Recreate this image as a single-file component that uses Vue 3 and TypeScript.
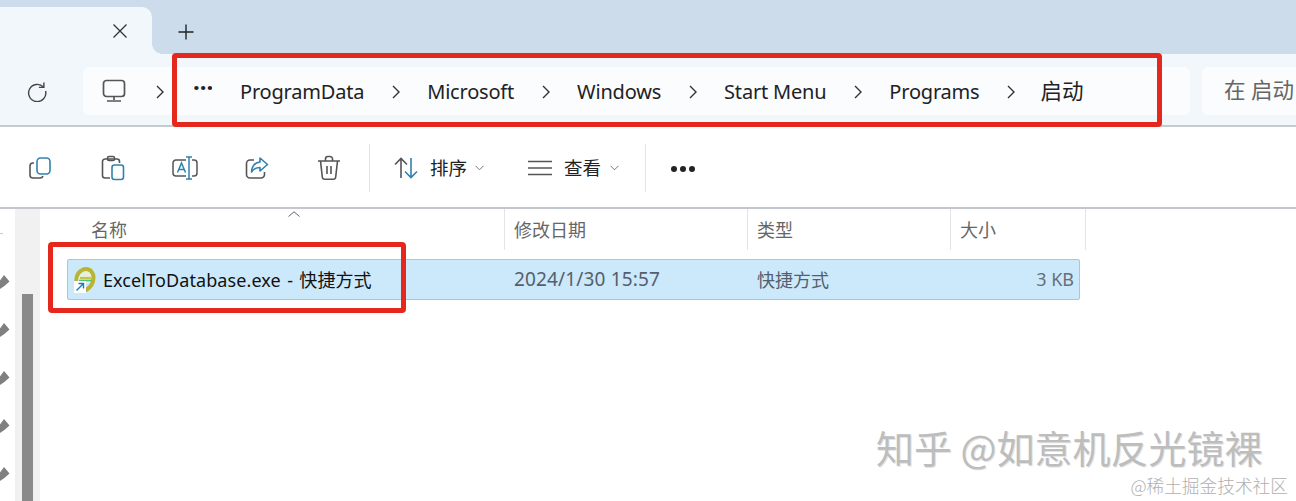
<script setup lang="ts">
const crumbs: string[] = ['ProgramData', 'Microsoft', 'Windows', 'Start Menu', 'Programs']
const pins: number[] = [1, 2, 3, 4, 5]
</script>

<template>
  <div class="win">
    <div class="tabstrip">
      <div class="tab">
        <svg class="close" width="14" height="14" viewBox="0 0 14 14"><path d="M.5.5l13 13M13.500.5l-13 13" stroke="#333" stroke-width="1.300" fill="none" /></svg>
      </div>
      <svg class="plus" width="16" height="16" viewBox="0 0 16 16"><path d="M8 .5v15M.5 8h15" stroke="#222" stroke-width="1.400" fill="none" /></svg>
    </div>

    <div class="addr">
      <svg class="refresh" width="22" height="22" viewBox="0 0 22 22" fill="none" stroke="#444" stroke-width="1.400"><path d="M17.600 7.200A8.600 8.600 0 1 0 19.600 11" /><path d="M17.900 2.400v5h-5" /></svg>
      <div class="crumbbox">
        <svg class="pc" width="24" height="24" viewBox="0 0 24 24" fill="none" stroke="#555" stroke-width="1.700"><rect x="1.500" y="1.500" width="21" height="16" rx="3" /><path d="M12 18v3M5 22h14" /></svg>
        <svg class="chev first" width="8" height="14" viewBox="0 0 8 14"><path d="M1 1l6 6-6 6" stroke="#333" stroke-width="1.400" fill="none" /></svg>
        <span class="more">···</span>
        <template v-for="c in crumbs" :key="c">
          <span class="crumb">{{ c }}</span>
          <svg class="chev" width="8" height="14" viewBox="0 0 8 14"><path d="M1 1l6 6-6 6" stroke="#333" stroke-width="1.400" fill="none" /></svg>
        </template>
        <span class="crumb cjk">启动</span>
      </div>
      <div class="search">在 启动</div>
    </div>

    <div class="toolbar">
      <button class="tool t1"><svg width="24" height="24" viewBox="0 0 24 24" fill="none" stroke-width="1.600"><path d="M5 7H4a3 3 0 0 0-3 3v9a3 3 0 0 0 3 3h7a3 3 0 0 0 3-2" stroke="#555" /><rect x="8" y="2" width="13" height="16" rx="3.500" stroke="#2f82b0" /></svg></button>
      <button class="tool"><svg width="24" height="26" viewBox="0 0 24 26" fill="none" stroke-width="1.600"><path d="M9 23H4a2.500 2.500 0 0 1-2.500-2.500V6.500A2.500 2.500 0 0 1 4 4h12a2.500 2.500 0 0 1 2.500 2.500V8" stroke="#555" /><rect x="6.500" y="1.500" width="7" height="4" rx="1.500" stroke="#555" /><rect x="11" y="10" width="11.500" height="14.500" rx="2.500" stroke="#2f82b0" /></svg></button>
      <button class="tool"><svg width="26" height="24" viewBox="0 0 26 24" fill="none" stroke-width="1.500"><path d="M14 4H4a3 3 0 0 0-3 3v10a3 3 0 0 0 3 3h10M20 4h2a3 3 0 0 1 3 3v10a3 3 0 0 1-3 3h-2" stroke="#555" /><path d="M5.500 16.500 9.500 7l4 9.500M6.800 13.500h5.400" stroke="#2f82b0" /><path d="M14 1h6M17 1v22M14 23h6" stroke="#2f82b0" /></svg></button>
      <button class="tool"><svg width="24" height="24" viewBox="0 0 24 24" fill="none" stroke-width="1.600"><path d="M9 4H5a3.500 3.500 0 0 0-3.500 3.500v11A3.500 3.500 0 0 0 5 22h11a3.500 3.500 0 0 0 3.500-3.500V16" stroke="#555" /><path d="M15 2l7.500 6.500L15 15v-3.500c-4 0-6.500 1-8.500 4.500 0-5 3-9.500 8.500-10z" stroke="#2f82b0" stroke-linejoin="round" /></svg></button>
      <button class="tool"><svg width="24" height="26" viewBox="0 0 24 26" fill="none" stroke="#555" stroke-width="1.600"><path d="M1 6h22M8.500 6V4a2.500 2.500 0 0 1 2.500-2.500h2A2.500 2.500 0 0 1 15.500 4v2M3.500 6l1.800 16a2.500 2.500 0 0 0 2.500 2.300h8.400a2.500 2.500 0 0 0 2.500-2.300L20.500 6M10 11v8M14 11v8" /></svg></button>
      <i class="sep s1"></i>
      <div class="menu sort">
        <svg width="24" height="22" viewBox="0 0 24 22" fill="none" stroke-width="1.600"><path d="M7 21V1.500M1 7.500l6-6 6 6" stroke="#555" /><path d="M17 1v19.500M11 14.500l6 6 6-6" stroke="#2f82b0" /></svg>
        <span>排序</span>
        <svg class="caret" width="9" height="6" viewBox="0 0 9 6"><path d="M.5.800l4 4 4-4" stroke="#777" fill="none" /></svg>
      </div>
      <div class="menu view">
        <svg width="24" height="16" viewBox="0 0 24 16" fill="none" stroke="#555" stroke-width="1.300"><path d="M0 1.500h24M0 8h24M0 14.500h24" /></svg>
        <span>查看</span>
        <svg class="caret" width="9" height="6" viewBox="0 0 9 6"><path d="M.5.800l4 4 4-4" stroke="#777" fill="none" /></svg>
      </div>
      <i class="sep s2"></i>
      <div class="dots"><b></b><b></b><b></b></div>
    </div>

    <div class="content">
      <aside class="side">
        <div class="pins">
          <i class="tick"></i>
          <svg v-for="p in pins" :key="p" width="10" height="14" viewBox="0 0 10 14"><path d="M0 14V5.500L4 0l5.500 6.500L5 10.500Z" fill="#808080" /></svg>
        </div>
        <div class="track"><div class="thumb"></div></div>
      </aside>
      <div class="list">
        <div class="head">
          <div class="hc c1">名称<svg class="sortup" width="12" height="6" viewBox="0 0 12 6"><path d="M.5 5.500 6 .8l5.500 4.700" stroke="#666" fill="none" /></svg></div>
          <div class="hc c2">修改日期</div>
          <div class="hc c3">类型</div>
          <div class="hc c4">大小</div>
        </div>
        <div class="row">
          <div class="name">
            <span class="ico">
              <svg width="22" height="25" viewBox="0 0 22 25" fill="none"><circle cx="11" cy="10" r="7" fill="#e6f1dc" /><path d="M3.500 19C1.500 15 2 9.500 4.500 6 7 3 10 2 12 2c4.500 0 7.500 4 7.500 8.500 0 5-3 10-8 13" stroke="#b9b431" stroke-width="4" /><path d="M6 11h11" stroke="#c8c34a" stroke-width="2.200" /><path d="M5 13.500h13" stroke="#4cc27c" stroke-width="1.600" /></svg>
              <svg class="arrow" width="12" height="12" viewBox="0 0 12 12"><rect width="12" height="12" fill="#fff" /><path d="M2.500 9.500l7-7M4.500 2.500h5v5" stroke="#1f78b4" stroke-width="1.400" fill="none" /></svg>
            </span>
            <span class="fname">ExcelToDatabase.exe - 快捷方式</span>
          </div>
          <div class="date">2024/1/30 15:57</div>
          <div class="type">快捷方式</div>
          <div class="size">3 KB</div>
        </div>
      </div>
    </div>

    <div class="redbox rb1"></div>
    <div class="redbox rb2"></div>
    <div class="wm">知乎 @如意机反光镜裸</div>
    <div class="wm2">@稀土掘金技术社区</div>
  </div>
</template>

<style>
html, body { margin: 0; background: #fff; overflow: hidden; }
</style>

<style scoped>
.win {
  position: relative;
  width: 1296px;
  height: 501px;
  overflow: hidden;
  background: #fff;
  color: #1b1b1b;
  font-family: "Noto Sans", "Noto Sans CJK SC", sans-serif;
}
.tabstrip {
  height: 54px;
  background: #cddcea;
  display: flex;
  align-items: flex-end;
}
.tab {
  position: relative;
  width: 152px;
  height: 47px;
  background: #f2f7fc;
  border-top-right-radius: 10px;
  display: flex;
  justify-content: flex-end;
  align-items: flex-start;
  box-sizing: border-box;
  padding: 17px 25px 0 0;
}
.tab::after {
  content: "";
  position: absolute;
  left: 100%;
  bottom: 0;
  width: 10px;
  height: 10px;
  background: radial-gradient(circle at 100% 0, transparent 9.5px, #f2f7fc 10px);
}
.plus { margin: 0 0 14px 26px; }
.addr {
  height: 68px;
  padding-top: 3px;
  background: #f2f7fc;
  border-bottom: 2px solid #c6cbd0;
  display: flex;
  align-items: center;
}
.refresh { margin: 0 0 0 26px; flex: none; }
.crumbbox {
  margin-left: 35px;
  width: 1107px;
  height: 48px;
  background: #fafcfe;
  border-radius: 6px;
  display: flex;
  align-items: center;
  flex: none;
  font-size: 20px;
  letter-spacing: -0.2px;
  color: #222;
}
.pc { margin-left: 19px; flex: none; }
.chev { margin: 2px 27.5px 0; flex: none; }
.chev.first { margin: 2px 0 0 30px; }
.more {
  margin-left: 29px;
  width: 47px;
  font-size: 24px;
  font-weight: 700;
  letter-spacing: 0;
  line-height: 1;
  position: relative;
  top: -4px;
}
.crumb { white-space: nowrap; }
.crumb.cjk { font-size: 21.5px; letter-spacing: 0; margin: -3px 0 0 -2px; }
.search {
  margin-left: 12px;
  flex: 1;
  height: 48px;
  background: #fafcfe;
  border-radius: 6px 0 0 6px;
  padding-left: 22px;
  font-size: 21.5px;
  line-height: 46px;
  color: #666;
  white-space: nowrap;
}
.toolbar {
  height: 79px;
  padding-top: 1px;
  border-bottom: 2px solid #c4c8cc;
  display: flex;
  align-items: center;
  background: #fff;
}
.tool {
  width: 72px;
  height: 40px;
  padding: 0;
  background: none;
  border: 0;
  display: flex;
  align-items: center;
  justify-content: center;
  flex: none;
}
.t1 { margin-left: 5px; }
.sep {
  width: 1px;
  height: 48px;
  background: #e2e4e6;
  flex: none;
}
.s1 { margin-left: 4px; }
.menu {
  display: flex;
  align-items: center;
  font-size: 18.5px;
  color: #222;
  flex: none;
}
.menu span { margin: -1px 0 0 12px; }
.sort { margin-left: 24px; }
.sort .caret { margin-left: 8px; }
.view { margin-left: 44px; }
.view .caret { margin-left: 9px; }
.s2 { margin-left: 26px; }
.dots { display: flex; gap: 3px; margin-left: 25px; margin-top: 2px; }
.dots b { width: 6px; height: 6px; border-radius: 50%; background: #222; }
.content { display: flex; height: 292px; }
.side {
  width: 44px;
  display: flex;
  flex: none;
}
.pins {
  width: 15px;
  padding-top: 24px;
  display: flex;
  flex-direction: column;
  gap: 34px;
  box-sizing: border-box;
  flex: none;
}
.pins svg { flex: none; }
.tick { width: 3px; height: 1px; background: #ccc; margin-bottom: 7px; }
.track {
  width: 25px;
  background: #f1f1f1;
  padding: 85px 7px 0;
  box-sizing: border-box;
  flex: none;
}
.thumb { height: 100%; background: #8a8a8a; }
.list { flex: 1; padding-left: 1px; }
.head {
  display: flex;
  height: 43px;
  font-size: 18px;
  color: #666;
  width: 1041px;
}
.hc {
  box-sizing: border-box;
  height: 41px;
  padding-left: 9px;
  padding-top: 8px;
  border-right: 1px solid #e4e4e4;
  position: relative;
  flex: none;
  line-height: 26px;
}
.c1 { width: 460px; padding-left: 46px; }
.c2 { width: 243px; }
.c3 { width: 203px; }
.c4 { width: 135px; }
.sortup { position: absolute; left: 243px; top: 2px; }
.row {
  margin: 7px 0 0 22px;
  width: 1013px;
  height: 41px;
  box-sizing: border-box;
  background: #cce8fb;
  border: 1px solid #9dcbe6;
  border-radius: 2px;
  display: flex;
  align-items: center;
  padding-bottom: 2px;
  font-size: 18px;
}
.name {
  width: 438px;
  display: flex;
  align-items: center;
  white-space: nowrap;
  color: #111;
  flex: none;
}
.fname { word-spacing: 1.5px; letter-spacing: 0.1px; }
.ico { position: relative; width: 22px; height: 25px; margin: 2px 7px 0 6px; flex: none; }
.ico svg { display: block; }
.arrow { position: absolute; left: 0; bottom: -1px; }
.date { width: 243px; font-size: 19px; letter-spacing: 0.15px; color: #555f6b; flex: none; padding-left: 8px; box-sizing: border-box; }
.type { width: 203px; color: #555f6b; flex: none; padding-left: 8px; box-sizing: border-box; }
.size { flex: 1; text-align: right; color: #666f79; padding-right: 5px; }
.redbox {
  position: absolute;
  box-sizing: border-box;
  border: 5px solid #e5281e;
  border-radius: 4px;
}
.rb1 { left: 172px; top: 53px; width: 990px; height: 74px; }
.rb2 { left: 48px; top: 242px; width: 358px; height: 71px; }
.wm {
  position: absolute;
  left: 876px;
  top: 425px;
  font-size: 38px;
  line-height: 44px;
  color: #bdbdbd;
  text-shadow: 1px 1px 0 #e4e4e4;
  white-space: nowrap;
  font-family: "Noto Sans CJK SC", sans-serif;
}
.wm2 {
  position: absolute;
  right: 8px;
  top: 473px;
  font-size: 17.7px;
  line-height: 24px;
  font-weight: 300;
  color: #b0b0b0;
  white-space: nowrap;
  font-family: "Noto Sans CJK SC", sans-serif;
}
</style>
